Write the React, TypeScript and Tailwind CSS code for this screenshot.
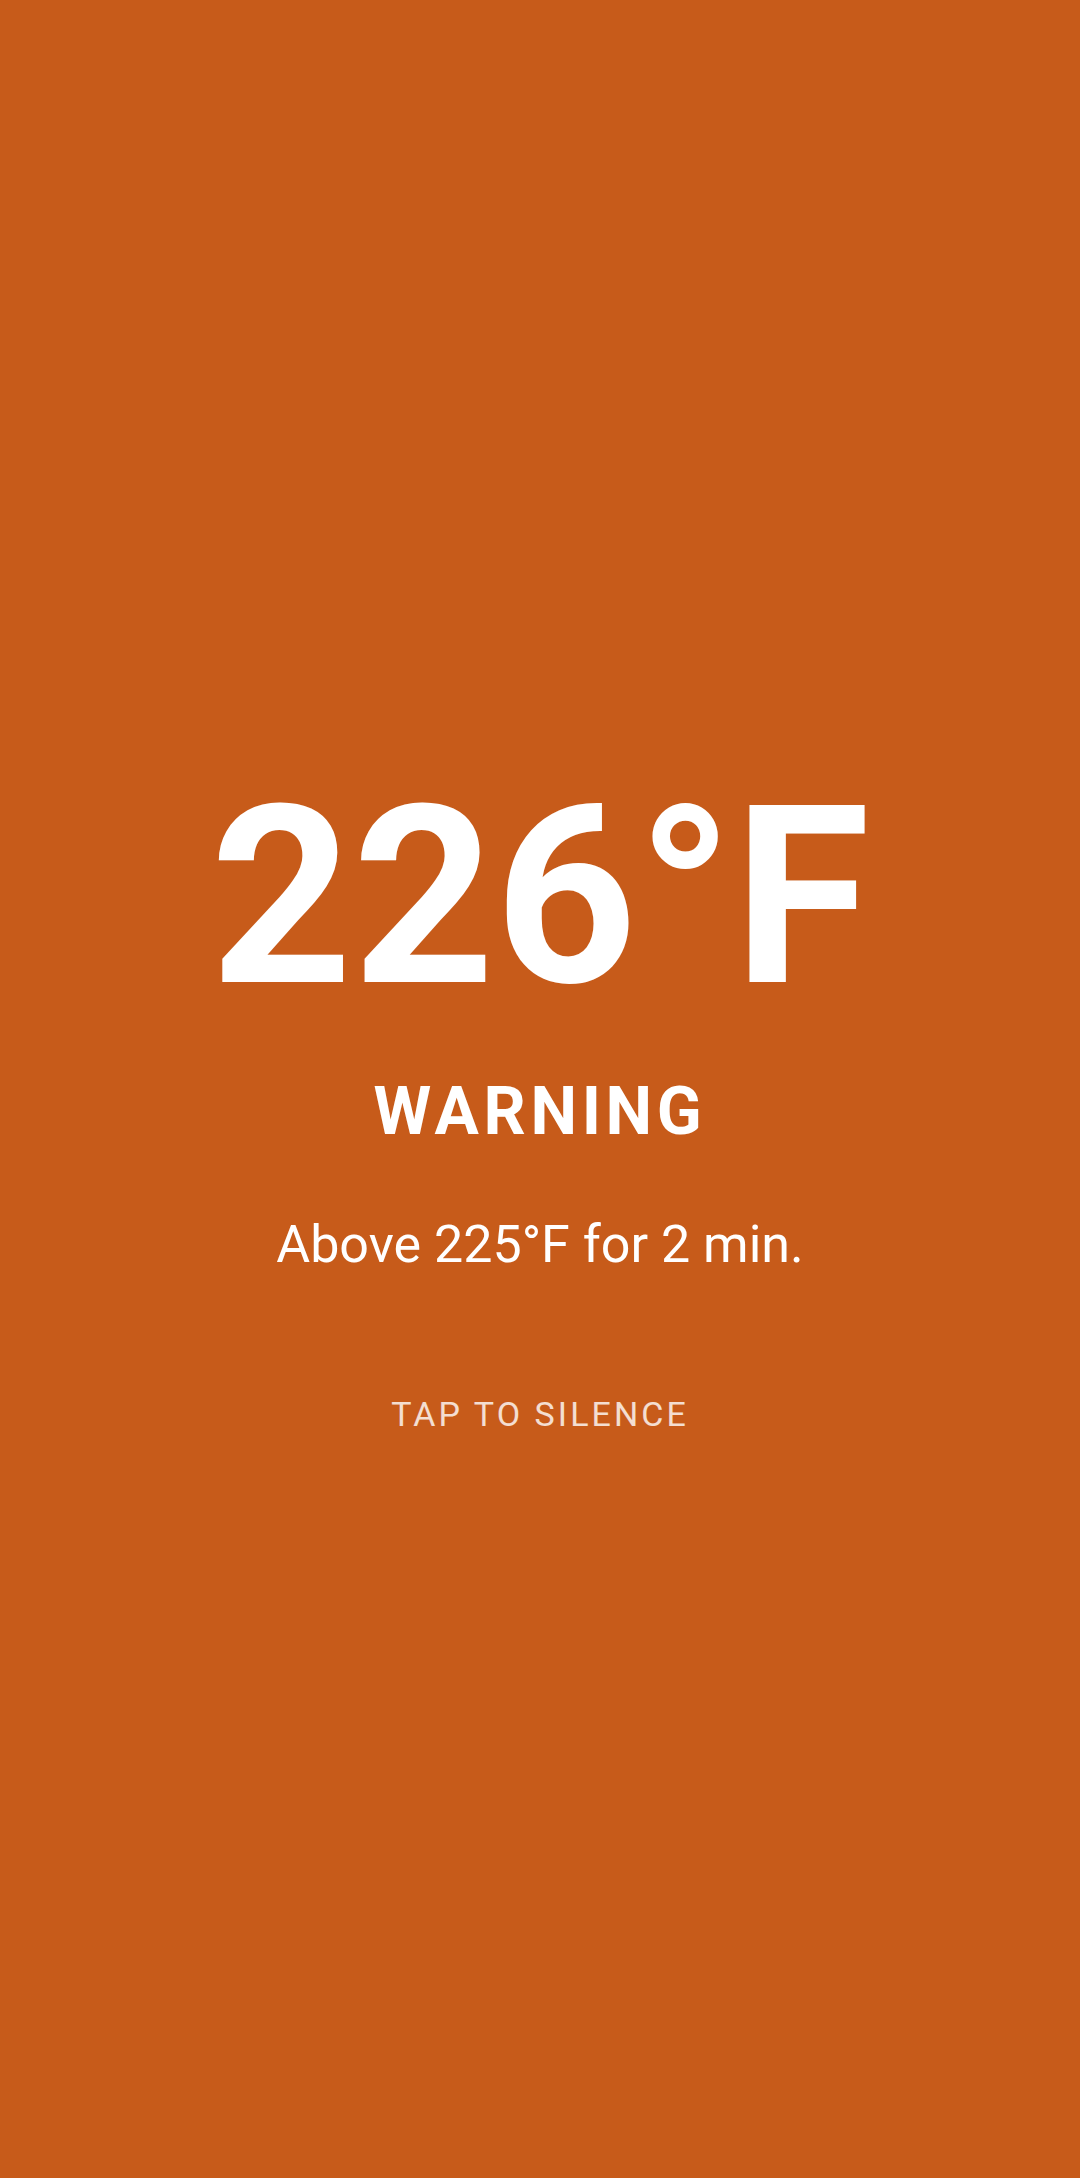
export default function App() {
  return (
    <div
      className="min-h-[2178px] w-full bg-[#c75b1a] flex flex-col items-center pt-[774px] text-white"
      style={{ fontFamily: 'Roboto, "Noto Sans", sans-serif' }}
    >
      <div className="text-[248px] leading-none font-bold">226°F</div>
      <div className="mt-[57px] text-[66px] leading-none font-bold tracking-[0.07em]">WARNING</div>
      <div className="mt-[74px] text-[52px] leading-none">Above 225°F for 2 min.</div>
      <div className="mt-[126px] text-[34px] leading-none tracking-[0.09em] text-white/80">TAP TO SILENCE</div>
    </div>
  );
}
